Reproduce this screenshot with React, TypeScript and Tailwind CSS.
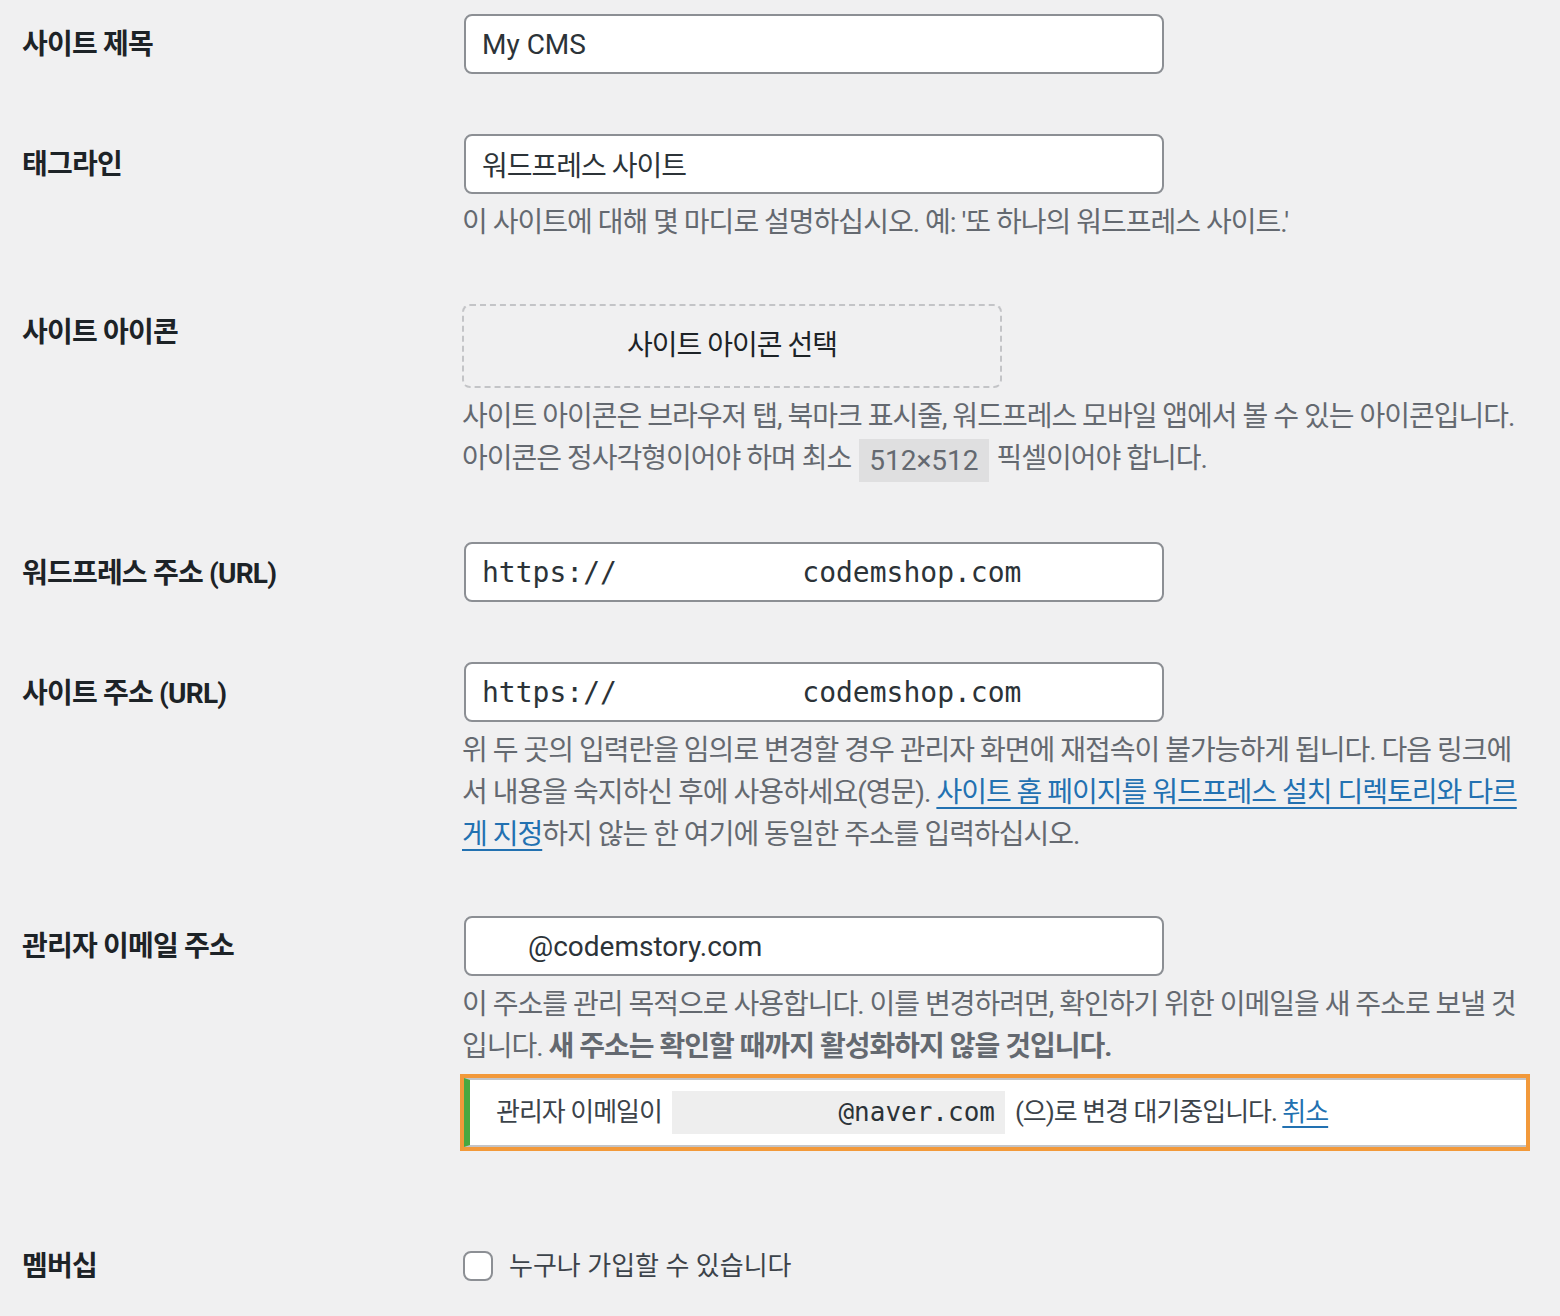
const sans = "font-['Roboto','Noto_Sans_CJK_KR',sans-serif]"
const mono = "font-['DejaVu_Sans_Mono','Noto_Sans_CJK_KR',monospace]"

function Row({ label, first, thPad = 'pt-[43px]', tdPad = 'pt-[30px]', children }: { label: string; first?: boolean; thPad?: string; tdPad?: string; children: React.ReactNode }) {
  return (
    <div className="flex">
      <div className={`w-[462px] shrink-0 pl-[22px] ${first ? 'pt-[27px]' : thPad}`}>
        <span className="text-[28px] leading-[36px] font-bold tracking-[-0.8px] text-[#1d2327]">{label}</span>
      </div>
      <div className={`flex-1 pr-[34px] pb-[30px] ${first ? 'pt-[14px]' : tdPad}`}>{children}</div>
    </div>
  )
}

function TextInput({ value, className = '' }: { value: string; className?: string }) {
  return (
    <input
      readOnly
      value={value}
      className={`ml-[2px] block h-[60px] w-[700px] rounded-[8px] border-2 border-[#8c8f94] bg-white px-[16px] text-[#2c3338] outline-none ${className}`}
    />
  )
}

function Desc({ children }: { children: React.ReactNode }) {
  return <p className="mt-[8px] whitespace-nowrap text-[28px] leading-[42px] tracking-[-1px] text-[#646970]">{children}</p>
}

export default function App() {
  return (
    <div className={`min-h-[1316px] w-[1560px] overflow-hidden bg-[#f0f0f1] ${sans}`}>
      <Row label="사이트 제목" first>
        <TextInput value="My CMS" className="text-[28px]" />
      </Row>

      <Row label="태그라인">
        <TextInput value="워드프레스 사이트" className="text-[28px] tracking-[-1px]" />
        <Desc>이 사이트에 대해 몇 마디로 설명하십시오. 예: '또 하나의 워드프레스 사이트.'</Desc>
      </Row>

      <Row label="사이트 아이콘" thPad="pt-[41px]">
        <button className="flex h-[84px] w-[540px] items-center justify-center rounded-[8px] border-2 border-dashed border-[#c3c4c7] text-[28px] tracking-[-1px] text-[#1d2327]">
          사이트 아이콘 선택
        </button>
        <Desc>
          사이트 아이콘은 브라우저 탭, 북마크 표시줄, 워드프레스 모바일 앱에서 볼 수 있는 아이콘입니다.
          <br />
          아이콘은 정사각형이어야 하며 최소{' '}
          <code className={`mx-[2px] inline-block bg-[#dfdfe0] px-[10px] align-middle text-[28px] leading-[43px] tracking-normal ${sans}`}>512×512</code>{' '}
          픽셀이어야 합니다.
        </Desc>
      </Row>

      <Row label="워드프레스 주소 (URL)" thPad="pt-[44px]">
        <TextInput value="https://           codemshop.com" className={`text-[28px] ${mono}`} />
      </Row>

      <Row label="사이트 주소 (URL)" thPad="pt-[44px]">
        <TextInput value="https://           codemshop.com" className={`text-[28px] ${mono}`} />
        <Desc>
          위 두 곳의 입력란을 임의로 변경할 경우 관리자 화면에 재접속이 불가능하게 됩니다. 다음 링크에
          <br />
          서 내용을 숙지하신 후에 사용하세요(영문).{' '}
          <a href="#" className="text-[#2271b1] underline underline-offset-[5px]">
            사이트 홈 페이지를 워드프레스 설치 디렉토리와 다르
            <br />
            게 지정
          </a>
          하지 않는 한 여기에 동일한 주소를 입력하십시오.
        </Desc>
      </Row>

      <Row label="관리자 이메일 주소" thPad="pt-[43px]">
        <TextInput value="@codemstory.com" className="pl-[62px] text-[28px]" />
        <Desc>
          이 주소를 관리 목적으로 사용합니다. 이를 변경하려면, 확인하기 위한 이메일을 새 주소로 보낼 것
          <br />
          입니다. <strong className="font-bold">새 주소는 확인할 때까지 활성화하지 않을 것입니다.</strong>
        </Desc>
        <div className="mt-[10px] mb-[30px] ml-[2px] border-y-2 border-l-[6px] border-y-[#c3c4c7] border-l-[#4aa840] bg-white py-[11px] pl-[26px] outline-4 outline-[#f2993a]">
          <p className="flex items-center whitespace-nowrap text-[26px] leading-[43px] tracking-[-1px] text-[#3c434a]">
            관리자 이메일이
            <code className={`mx-[10px] inline-block whitespace-pre bg-[#eeeeee] px-[10px] text-[26px] leading-[43px] tracking-normal text-[#2c3338] ${mono}`}>
              {'          @naver.com'}
            </code>
            (으)로 변경 대기중입니다.&nbsp;
            <a href="#" className="text-[#2271b1] underline underline-offset-[5px]">취소</a>
          </p>
        </div>
      </Row>

      <Row label="멤버십" thPad="pt-[42px]" tdPad="pt-[38px]">
        <label className="flex h-[42px] items-center gap-[16px] text-[26px] text-[#3c434a]">
          <span className="ml-[1px] block h-[30px] w-[30px] rounded-[8px] border-2 border-[#8c8f94] bg-white" />
          누구나 가입할 수 있습니다
        </label>
      </Row>
    </div>
  )
}
